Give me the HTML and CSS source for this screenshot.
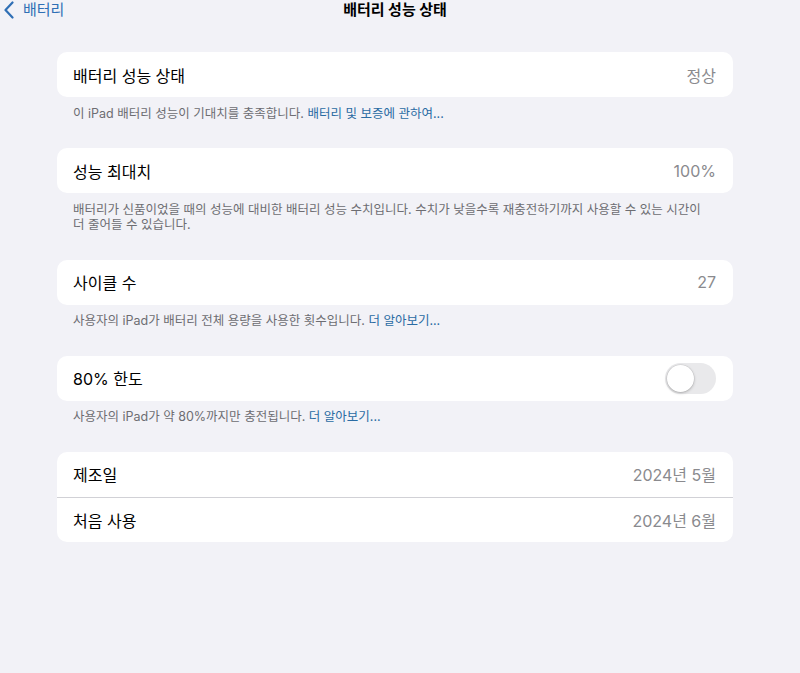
FILE: index.html
```html
<!DOCTYPE html>
<html lang="ko">
<head>
  <meta charset="UTF-8" />
  <meta name="viewport" content="width=device-width, initial-scale=1.0"/>
  <title>배터리 성능 상태</title>
  <link rel="stylesheet" href="styles.css">
</head>
<body>
  <header class="navbar">
    <a class="back" href="#">
      <svg class="chevron" width="12" height="18" viewBox="0 0 12 18">
        <path d="M9.5 1.5 L2.5 9 L9.5 16.5" fill="none" stroke="#2f6fb5" stroke-width="2.2" stroke-linecap="round" stroke-linejoin="round"/>
      </svg>
      <span>배터리</span>
    </a>
    <h1 class="title">배터리 성능 상태</h1>
    <div></div>
  </header>

  <main class="content">
    <section class="group">
      <div class="card">
        <div class="row"><span class="label">배터리 성능 상태</span><span class="value">정상</span></div>
      </div>
      <p class="footer">이 iPad 배터리 성능이 기대치를 충족합니다. <a href="#">배터리 및 보증에 관하여...</a></p>
    </section>

    <section class="group">
      <div class="card">
        <div class="row"><span class="label">성능 최대치</span><span class="value">100%</span></div>
      </div>
      <p class="footer">배터리가 신품이었을 때의 성능에 대비한 배터리 성능 수치입니다. 수치가 낮을수록 재충전하기까지 사용할 수 있는 시간이<br>더 줄어들 수 있습니다.</p>
    </section>

    <section class="group">
      <div class="card">
        <div class="row"><span class="label">사이클 수</span><span class="value">27</span></div>
      </div>
      <p class="footer">사용자의 iPad가 배터리 전체 용량을 사용한 횟수입니다. <a href="#">더 알아보기...</a></p>
    </section>

    <section class="group">
      <div class="card">
        <div class="row">
          <span class="label">80% 한도</span>
          <span class="toggle"><span class="knob"></span></span>
        </div>
      </div>
      <p class="footer">사용자의 iPad가 약 80%까지만 충전됩니다. <a href="#">더 알아보기...</a></p>
    </section>

    <section class="group">
      <div class="card">
        <div class="row"><span class="label">제조일</span><span class="value">2024년 5월</span></div>
        <div class="row divided"><span class="label">처음 사용</span><span class="value">2024년 6월</span></div>
      </div>
    </section>
  </main>
</body>
</html>
```

FILE: styles.css
```css
body { margin: 0; background: #f2f2f7; font-family: Inter, "Noto Sans CJK KR", sans-serif; color: #000; }
a { text-decoration: none; }

.navbar { display: grid; grid-template-columns: 1fr auto 1fr; align-items: center; height: 20px; padding-top: 0; }
.back { display: flex; align-items: center; gap: 8px; padding-left: 3px; color: #2f6fb5; font-size: 15px; line-height: 20px; }
.title { margin: 0 0 0 -10px; font-size: 15px; font-weight: 700; line-height: 20px; }

.content { width: 676px; margin-left: 57px; padding-top: 32px; }
.group { margin-bottom: 27px; }
.card { background: #fff; border-radius: 10px; overflow: hidden; }
.row { display: flex; justify-content: space-between; align-items: center; height: 45px; padding: 0 17px 0 16px; }
.row.divided { height: 44px; border-top: 1px solid #d1d1d6; }
.label { font-size: 16px; }
.value { font-size: 16px; color: #8a8a8e; }

.footer { margin: 0; padding: 8.5px 16px 0; font-size: 12.5px; line-height: 15.5px; color: #6d6d72; }
.footer a { color: #2a6ba3; }

.toggle { position: relative; width: 51px; height: 31px; border-radius: 16px; background: #e9e9eb; }
.knob { position: absolute; left: 2px; top: 2px; width: 27px; height: 27px; border-radius: 50%; background: #fff; box-shadow: 0 1px 3px rgba(0,0,0,0.25), 0 0 0 0.5px rgba(0,0,0,0.08); }
```
